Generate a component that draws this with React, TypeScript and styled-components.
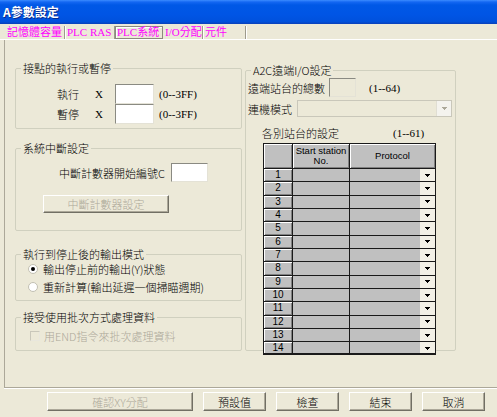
import styled, { createGlobalStyle } from "styled-components";

const GlobalStyle = createGlobalStyle`
  html, body { margin: 0; padding: 0; background: #ece9d8; }
  body {
    font-family: "Noto Sans CJK TC", "Liberation Sans", sans-serif;
    font-size: 11px;
    font-weight: 300;
    line-height: 12px;
    color: #000;
  }
  * { box-sizing: border-box; }
`;

const SERIF = `"Liberation Serif", "Noto Sans CJK TC", serif`;
const SANS = `"Liberation Sans", "Noto Sans CJK TC", sans-serif`;

const tabs = [
  { label: "記憶體容量", width: 60 },
  { label: "PLC RAS", width: 50 },
  { label: "PLC系統", width: 48, active: true },
  { label: "I/O分配", width: 40 },
  { label: "元件", width: 43 },
];

const stations = Array.from({ length: 14 }, (_, i) => i + 1);

const footerButtons = [
  { label: "確認XY分配", width: 146, disabled: true },
  { label: "預設值", width: 63 },
  { label: "檢查", width: 63 },
  { label: "結束", width: 63 },
  { label: "取消", width: 63 },
];

const DownArrow = ({ color = "#000" }: { color?: string }) => (
  <svg width="5" height="3" viewBox="0 0 5 3" shapeRendering="crispEdges">
    <polygon points="0,0 5,0 2.5,3" fill={color} />
  </svg>
);

export default function App() {
  return (
    <>
      <GlobalStyle />
      <Window>
        <TitleBar>A參數設定</TitleBar>
        <TabStrip>
          {tabs.map((t) => (
            <Tab key={t.label} $w={t.width} $active={!!t.active}>
              {t.label}
            </Tab>
          ))}
        </TabStrip>

        <Panel>
          <LeftColumn>
            <Group $top={22} $h={67}>
              <Legend>接點的執行或暫停</Legend>
              <PairRows>
                <PairRow>
                  <PairLabel>執行</PairLabel>
                  <Letter>X</Letter>
                  <TextBox $w={39} $h={20} />
                  <Hint>(0--3FF)</Hint>
                </PairRow>
                <PairRow>
                  <PairLabel>暫停</PairLabel>
                  <Letter>X</Letter>
                  <TextBox $w={39} $h={20} />
                  <Hint>(0--3FF)</Hint>
                </PairRow>
              </PairRows>
            </Group>

            <Group $top={13} $h={89}>
              <Legend>系統中斷設定</Legend>
              <CounterRow>
                <CounterLabel>中斷計數器開始編號C</CounterLabel>
                <TextBox $w={37} $h={19} />
              </CounterRow>
              <GroupButton disabled>中斷計數器設定</GroupButton>
            </Group>

            <Group $top={17} $h={53}>
              <Legend>執行到停止後的輸出模式</Legend>
              <OptionRow>
                <Radio $checked />
                輸出停止前的輸出(Y)狀態
              </OptionRow>
              <OptionRow>
                <Radio />
                重新計算(輸出延遲一個掃瞄週期)
              </OptionRow>
            </Group>

            <Group $top={10} $h={40}>
              <Legend>接受使用批次方式處理資料</Legend>
              <CheckRow>
                <CheckBox />
                用END指令來批次處理資料
              </CheckRow>
            </Group>
          </LeftColumn>

          <RightColumn>
            <Group $top={24} $h={287}>
              <Legend>A2C遠端I/O設定</Legend>
              <RemoteRow $mt={2} $h={19}>
                <RemoteLabel $w={81}>遠端站台的總數</RemoteLabel>
                <TextBox $w={27} $h={19} $disabled />
                <Hint $ml={13}>(1--64)</Hint>
              </RemoteRow>
              <RemoteRow $mt={3} $h={17}>
                <RemoteLabel $w={49}>連機模式</RemoteLabel>
                <Select>
                  <SelectArrow>
                    <DownArrow color="#aca899" />
                  </SelectArrow>
                </Select>
              </RemoteRow>
              <RemoteRow $mt={9} $h={14}>
                <StationsLabel>各別站台的設定</StationsLabel>
                <Hint $ml={0}>(1--61)</Hint>
              </RemoteRow>

              <Grid>
                <GridHead>
                  <HeadCell />
                  <HeadCell>
                    Start station
                    <br />
                    No.
                  </HeadCell>
                  <HeadCell $last>Protocol</HeadCell>
                </GridHead>
                {stations.map((n) => (
                  <GridRow key={n}>
                    <NumCell>{n}</NumCell>
                    <DataCell />
                    <ProtocolCell>
                      <CellArrow>
                        <DownArrow />
                      </CellArrow>
                    </ProtocolCell>
                  </GridRow>
                ))}
              </Grid>
            </Group>
          </RightColumn>
        </Panel>

        <Footer>
          {footerButtons.map((b) => (
            <FooterButton key={b.label} $w={b.width} disabled={b.disabled}>
              {b.label}
            </FooterButton>
          ))}
        </Footer>
      </Window>
    </>
  );
}

const Window = styled.div`
  width: 497px;
  height: 417px;
  overflow: hidden;
  display: flex;
  flex-direction: column;
  background: #ece9d8;
`;

const TitleBar = styled.div`
  height: 24px;
  flex: none;
  display: flex;
  align-items: center;
  padding-left: 3px;
  color: #fff;
  font-size: 12px;
  font-weight: bold;
  text-shadow: 1px 1px 0 #0a2a8a;
  background: linear-gradient(
    #3b8cff 0,
    #1467f2 2px,
    #0058e6 5px,
    #0055e5 60%,
    #0051dc 90%,
    #0a3fb8 100%
  );
`;

const TabStrip = styled.div`
  height: 16px;
  flex: none;
  display: flex;
  padding: 2px 0 0 5px;
  border-bottom: 1px solid #fff;
`;

const Tab = styled.div<{ $w: number; $active: boolean }>`
  width: ${(p) => p.$w}px;
  height: 13px;
  padding-left: 2px;
  font-family: ${SERIF};
  font-size: 11px;
  font-weight: 400;
  line-height: 12px;
  color: #ff00ff;
  white-space: nowrap;
  border-right: 1px solid #9d9a8c;
  box-shadow: 1px 0 0 #fff;
  ${(p) =>
    p.$active &&
    `
    border: 1px solid #8c8a7e;
    border-right-color: #8c8a7e;
    box-shadow: inset 1px 1px 0 #fff;
    line-height: 11px;
    padding-left: 1px;
  `}
`;

const Panel = styled.div`
  margin-left: 4px;
  height: 348px;
  flex: none;
  display: flex;
  padding-left: 10px;
  border-left: 1px solid #aca899;
  border-bottom: 1px solid #aca899;
  box-shadow: 0 1px 0 #fff;
`;

const LeftColumn = styled.div`
  width: 227px;
  display: flex;
  flex-direction: column;
`;

const RightColumn = styled.div`
  width: 211px;
  margin-left: 3px;
  display: flex;
  flex-direction: column;
`;

const Group = styled.fieldset<{ $top: number; $h: number }>`
  margin: ${(p) => p.$top}px 0 0;
  padding: 0;
  min-width: 0;
  height: ${(p) => p.$h}px;
  border: 1px solid #d0d0bf;
  border-radius: 2px;
`;

const Legend = styled.legend`
  margin-left: 5px;
  padding: 0 2px;
  font-size: 11px;
  line-height: 12px;
  white-space: nowrap;
`;

const PairRows = styled.div`
  padding: 10px 0 0 41px;
`;

const PairRow = styled.div`
  height: 20px;
  display: flex;
  align-items: center;
`;

const PairLabel = styled.span`
  width: 36px;
`;

const Letter = styled.span`
  width: 22px;
  padding-left: 2px;
  font-family: ${SERIF};
  font-weight: 400;
  font-size: 11px;
`;

const Hint = styled.span<{ $ml?: number }>`
  margin-left: ${(p) => p.$ml ?? 5}px;
  font-family: ${SERIF};
  font-weight: 400;
  font-size: 11px;
  white-space: nowrap;
`;

const TextBox = styled.div<{ $w: number; $h: number; $disabled?: boolean }>`
  width: ${(p) => p.$w}px;
  height: ${(p) => p.$h}px;
  flex: none;
  background: ${(p) => (p.$disabled ? "#ece9d8" : "#fff")};
  border: 1px solid;
  border-color: #8a8a82 #e4e2d6 #e4e2d6 #8a8a82;
`;

const CounterRow = styled.div`
  height: 19px;
  margin-top: 9px;
  padding-left: 40px;
  display: flex;
  align-items: center;
`;

const CounterLabel = styled.span`
  width: 115px;
  padding-right: 6px;
  text-align: right;
  white-space: nowrap;
`;

const raised = `
  background: #ece9d8;
  border: 1px solid;
  border-color: #fff #716f64 #716f64 #fff;
  box-shadow: inset -1px -1px 0 #aca899;
`;

const GroupButton = styled.button`
  display: block;
  width: 126px;
  height: 18px;
  margin: 13px 0 0 27px;
  padding: 0;
  ${raised}
  font-family: "Noto Sans CJK TC", sans-serif;
  font-size: 11px;
  font-weight: 300;
  line-height: 12px;
  color: #aca899;
`;

const OptionRow = styled.div`
  height: 18px;
  display: flex;
  align-items: center;
  padding-left: 12px;
  white-space: nowrap;
`;

const Radio = styled.span<{ $checked?: boolean }>`
  width: 10px;
  height: 10px;
  margin-right: 5px;
  border-radius: 50%;
  border: 1px solid #c2c0b2;
  background: #fff;
  display: flex;
  align-items: center;
  justify-content: center;
  &::after {
    content: "";
    width: 4px;
    height: 4px;
    border-radius: 50%;
    background: ${(p) => (p.$checked ? "#000" : "transparent")};
  }
`;

const CheckRow = styled.div`
  height: 12px;
  margin-top: 7px;
  padding-left: 14px;
  display: flex;
  align-items: center;
  color: #aca899;
  white-space: nowrap;
`;

const CheckBox = styled.span`
  width: 10px;
  height: 10px;
  margin-right: 4px;
  border: 1px solid;
  border-color: #c9c7ba #e9e7dd #e9e7dd #c9c7ba;
  background: #ece9d8;
`;

const RemoteRow = styled.div<{ $mt: number; $h: number }>`
  height: ${(p) => p.$h}px;
  margin-top: ${(p) => p.$mt}px;
  padding-left: 2px;
  display: flex;
  align-items: center;
`;

const RemoteLabel = styled.span<{ $w: number }>`
  width: ${(p) => p.$w}px;
  white-space: nowrap;
`;

const StationsLabel = styled.span`
  width: 145px;
  padding-left: 14px;
  white-space: nowrap;
`;

const Select = styled.div`
  width: 155px;
  height: 17px;
  display: flex;
  justify-content: flex-end;
  border: 1px solid #c9c7ba;
  background: #ece9d8;
`;

const SelectArrow = styled.div`
  width: 15px;
  display: flex;
  align-items: center;
  justify-content: center;
  background: #f4f3ee;
  border-left: 1px solid #e0ded3;
`;

const Grid = styled.div`
  width: 173px;
  height: 212px;
  margin: 3px 0 0 17px;
  overflow: hidden;
  border: 1px solid #1a1a1a;
  border-bottom-width: 2px;
  background: #c0c0c0;
  position: relative;
`;

const columns = "29px 57px 85px";

const GridHead = styled.div`
  display: grid;
  grid-template-columns: ${columns};
  height: 25px;
  border-bottom: 1px solid #1a1a1a;
`;

const HeadCell = styled.div<{ $last?: boolean }>`
  display: flex;
  align-items: center;
  justify-content: center;
  text-align: center;
  font-family: ${SANS};
  font-weight: 400;
  font-size: 9.5px;
  line-height: 10px;
  background: #c0c0c0;
  border-right: ${(p) => (p.$last ? "none" : "1px solid #1a1a1a")};
  box-shadow: inset 1px 1px 0 #fff, inset -1px -1px 0 #808080;
`;

const GridRow = styled.div`
  display: grid;
  grid-template-columns: ${columns};
  height: calc(40px / 3);
  flex: none;
  border-bottom: 1px solid #1a1a1a;
`;

const NumCell = styled.div`
  display: flex;
  align-items: center;
  justify-content: center;
  font-family: ${SANS};
  font-weight: 400;
  font-size: 10px;
  line-height: 10px;
  background: #c0c0c0;
  border-right: 1px solid #1a1a1a;
  box-shadow: inset 1px 1px 0 #fff, inset -1px -1px 0 #808080;
`;

const DataCell = styled.div`
  background: #c0c0c0;
  border-right: 1px solid #1a1a1a;
`;

const ProtocolCell = styled.div`
  display: flex;
  justify-content: flex-end;
  background: #c0c0c0;
`;

const CellArrow = styled.div`
  width: 15px;
  display: flex;
  align-items: center;
  justify-content: center;
  background: #f2f0e6;
`;

const Footer = styled.div`
  height: 19px;
  margin-top: 4px;
  padding-left: 47px;
  display: flex;
  gap: 10px;
  flex: none;
`;

const FooterButton = styled.button<{ $w: number }>`
  width: ${(p) => p.$w}px;
  height: 19px;
  padding: 0;
  ${raised}
  font-family: "Noto Sans CJK TC", sans-serif;
  font-size: 11px;
  font-weight: 300;
  line-height: 12px;
  color: #000;
  &:disabled {
    color: #aca899;
  }
`;
